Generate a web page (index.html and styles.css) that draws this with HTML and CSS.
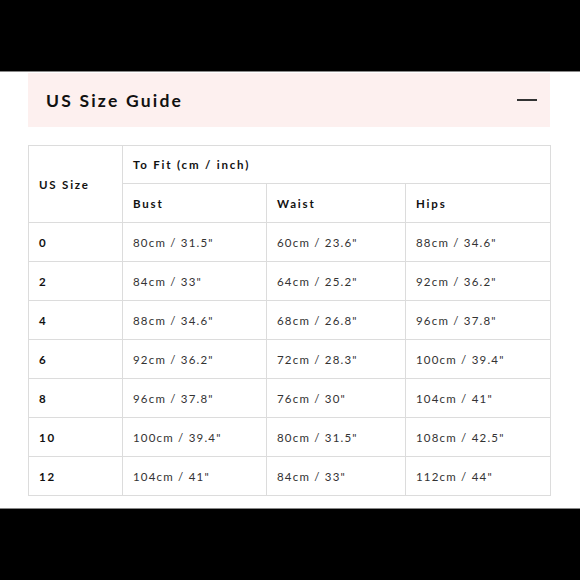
FILE: index.html
```html
<!DOCTYPE html>
<html>
<head>
<meta charset="utf-8">
<link rel="stylesheet" href="styles.css">
</head>
<body>
<div class="bar top"></div>
<main class="content">
  <div class="guide-head">
    <h1 class="title">US Size Guide</h1>
    <span class="minus"></span>
  </div>
  <table class="sizes">
    <colgroup>
      <col class="c1"><col class="c2"><col class="c3"><col class="c4">
    </colgroup>
    <thead>
      <tr><th rowspan="2" class="size-h">US Size</th><th colspan="3">To Fit (cm / inch)</th></tr>
      <tr><th>Bust</th><th>Waist</th><th>Hips</th></tr>
    </thead>
    <tbody>
      <tr><th>0</th><td>80cm / 31.5"</td><td>60cm / 23.6"</td><td>88cm / 34.6"</td></tr>
      <tr><th>2</th><td>84cm / 33"</td><td>64cm / 25.2"</td><td>92cm / 36.2"</td></tr>
      <tr><th>4</th><td>88cm / 34.6"</td><td>68cm / 26.8"</td><td>96cm / 37.8"</td></tr>
      <tr><th>6</th><td>92cm / 36.2"</td><td>72cm / 28.3"</td><td>100cm / 39.4"</td></tr>
      <tr><th>8</th><td>96cm / 37.8"</td><td>76cm / 30"</td><td>104cm / 41"</td></tr>
      <tr><th>10</th><td>100cm / 39.4"</td><td>80cm / 31.5"</td><td>108cm / 42.5"</td></tr>
      <tr><th>12</th><td>104cm / 41"</td><td>84cm / 33"</td><td>112cm / 44"</td></tr>
    </tbody>
  </table>
</main>
<div class="bar bottom"></div>
</body>
</html>
```
FILE: styles.css
```css
html, body {
  margin: 0;
  padding: 0;
  background: #fff;
  font-family: Lato, "Open Sans", sans-serif;
  color: #222;
}
.bar {
  background: #000;
}
.bar.top {
  height: 71px;
  border-bottom: 1px solid #888;
}
.bar.bottom {
  height: 71px;
  border-top: 1px solid #888;
}
.content {
  padding: 1px 30px 0 28px;
  height: 435px;
}
.guide-head {
  background: #fdf0ef;
  height: 54px;
  display: flex;
  align-items: center;
  justify-content: space-between;
  padding: 0 13px 0 18px;
}
.title {
  margin: 0;
  font-size: 17.5px;
  font-weight: 700;
  letter-spacing: 2.2px;
  color: #111;
}
.minus {
  width: 20px;
  height: 2px;
  background: #333;
}
.sizes {
  margin-top: 18px;
  width: 522px;
  border-collapse: collapse;
  table-layout: fixed;
  font-size: 11.5px;
  letter-spacing: 1.2px;
}
.c1 { width: 94px; }
.c2 { width: 144px; }
.c3 { width: 139px; }
.c4 { width: 145px; }
.sizes th, .sizes td {
  border: 1.5px solid #dcdcdc;
  text-align: left;
  padding: 0 0 0 10px;
  height: 38px;
}
.sizes thead tr:first-child th {
  height: 37px;
}
.sizes th {
  font-weight: 700;
  color: #111;
  letter-spacing: 1.8px;
}
.sizes td {
  font-weight: 400;
  color: #333;
}
```
